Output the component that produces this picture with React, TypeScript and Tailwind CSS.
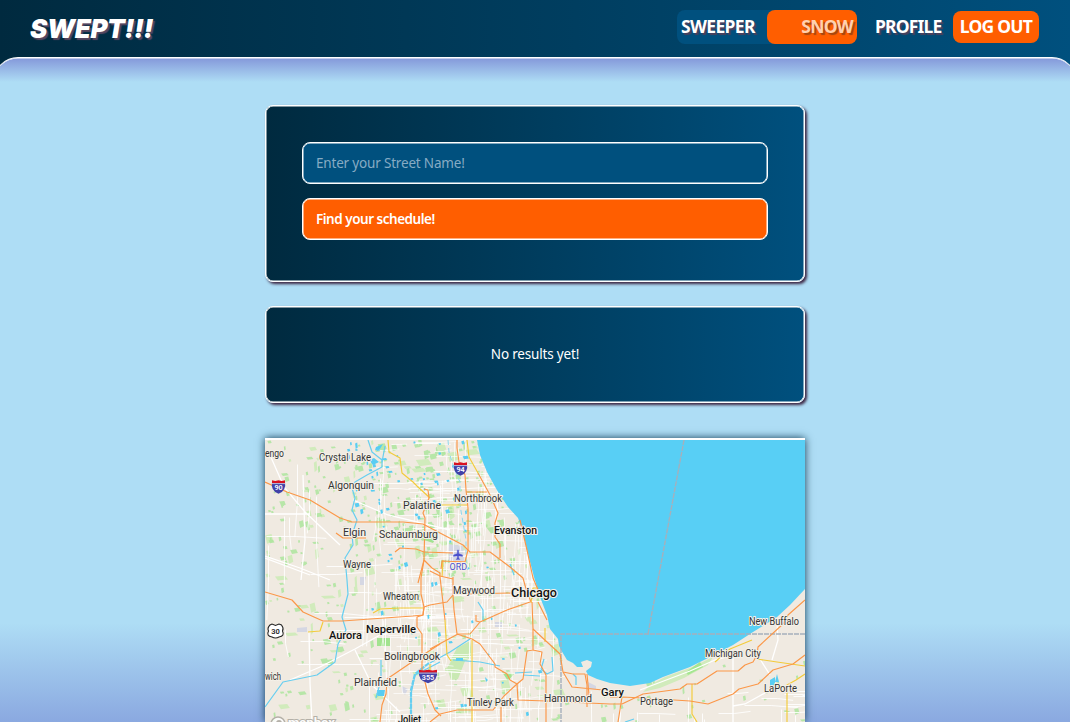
import React from 'react';

type Place = { name: string; x: number; y: number; w: number; size?: number; major?: boolean };

const places: Place[] = [
  { name: 'engo', x: 265, y: 457, w: 19 },
  { name: 'Crystal Lake', x: 319, y: 461, w: 52 },
  { name: 'Algonquin', x: 328, y: 489, w: 46 },
  { name: 'Palatine', x: 403, y: 509, w: 38 },
  { name: 'Northbrook', x: 454, y: 502, w: 48 },
  { name: 'Elgin', x: 343, y: 536, w: 23 },
  { name: 'Schaumburg', x: 379, y: 538, w: 59 },
  { name: 'Evanston', x: 494, y: 534, w: 43, major: true },
  { name: 'Wayne', x: 343, y: 568, w: 28 },
  { name: 'Wheaton', x: 383, y: 600, w: 36 },
  { name: 'Maywood', x: 453, y: 594, w: 42 },
  { name: 'Chicago', x: 511, y: 596.5, w: 46, size: 12.5, major: true },
  { name: 'Aurora', x: 329, y: 639, w: 33, size: 11, major: true },
  { name: 'Naperville', x: 366, y: 633, w: 50, size: 11, major: true },
  { name: 'Bolingbrook', x: 384, y: 660, w: 56 },
  { name: 'wich', x: 265, y: 680, w: 16 },
  { name: 'Plainfield', x: 354, y: 686, w: 43 },
  { name: 'Tinley Park', x: 467, y: 706, w: 47 },
  { name: 'Hammond', x: 544, y: 702, w: 48 },
  { name: 'Gary', x: 601, y: 696, w: 23, size: 11, major: true },
  { name: 'Portage', x: 640, y: 705, w: 33 },
  { name: 'Joliet', x: 398, y: 723, w: 23, size: 11, major: true },
  { name: 'Michigan City', x: 705, y: 657, w: 56 },
  { name: 'New Buffalo', x: 749, y: 625, w: 50 },
  { name: 'LaPorte', x: 764, y: 692, w: 33 },
];

const highways = [
  'M265 482L287 492L310 500L340 518L352 522H403L423 524L440 533L463 545L470 552H490L510 567L523 578L526 589L531 602',
  'M457 440V448L459 462L465 475L466 490L468 508V550L465 562L455 562',
  'M466 492L487 492M478 473L490 495L498 513L495 523V537L500 544V558M520 520L527 550L533 578L539 592',
  'M424 489L428 490L429 498L423 513L425 518L424 560L421 578V594L424 607L423 615L417 617V627L422 634V670L428 694L435 710L441 716',
  'M424 560L432 568L440 573V577L445 620M424 560L418 583M395 552L400 548L416 549L424 552L453 553',
  'M336 533L343 538H366M430 571L440 576L453 579M441 569L442 561L465 562',
  'M265 592L292 600L303 612L314 617L323 621H342L413 616L423 615L424 607L430 605L447 602L453 595V577M453 595L454 610L457 634L472 639L480 644L495 664V667L507 674L510 680L517 684L518 700L546 701',
  'M430 649L458 634L470 634L480 622L507 610L530 602M480 622L476 621V615',
  'M532 602L533 629V650L527 651L523 679L517 684L504 696L493 710H457L440 714L430 722',
  'M533 629L560 654L563 672L572 687L603 690M533 650L542 652L540 664L546 675V722M538 602L547 620M563 672L573 674L585 674L587 685V707',
  'M440 644L412 662L387 679L386 694L382 705L380 722',
  'M546 701L567 702L610 704L622 704L643 694L680 689L687 684H697L717 671H738L745 665L753 662L757 655L758 647L783 624L788 615L805 600',
  'M610 697L622 697L643 698L690 701L708 704L733 694L739 689L758 684L773 670L793 664L805 655M622 697L618 722M501 722V707M463 594L512 593M587 674L589 695',
];

const yellowRoads = [
  'M388 440L389 452L400 458L402 473L413 482L418 487L430 498',
  'M467 440L469 457L478 473M440 505H467',
  'M308 632L320 631L323 622M373 613L380 609L400 608L423 608',
  'M445 620L447 655L451 661M472 640V722',
  'M805 674L796 680L787 685V722M757 659L777 662L805 666',
  'M692 684V714L697 722M715 662L730 649L752 640M531 603L533 588H538M545 628V642M442 577L443 560M430 664V670',
];

const waterways = [
  'M368 440L372 452L382 460V467L367 475L355 482L352 488L355 498L352 510L357 520L352 535L353 545L345 558L347 580L348 594L342 617L346 630L338 644L335 662L317 675L283 682L265 707',
  'M440 662L415 675L411 694V722M430 663L450 652L470 639',
  'M381 660L381 680L376 698M510 564L514 575M478 602L483 610V620M453 660L480 662L500 666M523 675L540 676M573 674L576 677V685M515 673L532 672',
  'M544 659L541 669L547 674L553 671L552 657M385 446L382 462M625 722L634 719',
];

function random(seed: number) {
  let s = seed;
  return () => {
    s = (s * 16807) % 2147483647;
    return s / 2147483647;
  };
}

function patches(seed: number, count: number, box: [number, number, number, number], size: number) {
  const r = random(seed);
  return Array.from({ length: count }, () => {
    const x = box[0] + r() * box[2];
    const y = box[1] + r() * box[3];
    const w = 1.5 + r() * r() * size;
    const h = 1.5 + r() * r() * size;
    return `M${x.toFixed(1)} ${y.toFixed(1)}l${w.toFixed(1)} ${(-h * 0.2).toFixed(1)}l${(w * 0.3).toFixed(1)} ${h.toFixed(1)}l${(-w).toFixed(1)} ${(h * 0.3).toFixed(1)}z`;
  }).join('');
}

function streets(seed: number, count: number, box: [number, number, number, number], reach: number) {
  const r = random(seed);
  return Array.from({ length: count }, (_, i) => {
    const x = Math.round(box[0] + r() * box[2]) + 0.5;
    const y = Math.round(box[1] + r() * box[3]) + 0.5;
    const len = reach * (0.4 + r());
    const bend = (r() - 0.5) * 6;
    return i % 2
      ? `M${x} ${y}h${(len / 2).toFixed(1)}l${(len / 2).toFixed(1)} ${bend.toFixed(1)}`
      : `M${x} ${y}v${(len / 2).toFixed(1)}l${bend.toFixed(1)} ${(len / 2).toFixed(1)}`;
  }).join('');
}

const paleGreens = patches(71, 150, [265, 440, 290, 282], 13);
const greens = patches(923, 330, [265, 440, 300, 282], 6);
const northGreens = patches(407, 150, [350, 440, 150, 130], 7);
const eastGreens = patches(515, 32, [600, 655, 205, 67], 6);
const ponds = patches(3301, 48, [345, 440, 120, 75], 4) + patches(817, 40, [370, 515, 180, 200], 3);
const fineStreets = streets(64, 300, [375, 440, 160, 282], 38);
const wideStreets = streets(1204, 80, [265, 440, 300, 282], 65);
const eastStreets = streets(882, 26, [590, 690, 215, 32], 42);

const lake =
  'M477 440L480 455L487 472L498 492L508 507L518 518L523 532L527 550L534 577L540 597L547 615L550 629L558 639L559 646L561 650L567 660L573 663L577 667L583 667L581 662L587 660L592 662L591 667L586 671L588 675L597 679L610 683L630 686L650 683L663 677L690 667L710 657L733 645L753 632L777 617L790 605L805 589V440Z';

function Interstate({ x, y, label }: { x: number; y: number; label: string }) {
  const w = label.length > 2 ? 9 : 6.5;
  return (
    <g transform={`translate(${x} ${y})`}>
      <path d={`M${-w} -5.5Q${-w - 1.5} 4 0 6.8Q${w + 1.5} 4 ${w} -5.5Z`} fill="#4142a8" />
      <path d={`M${-w} -4V-6.8L${-w / 2} -6L0 -6.8L${w / 2} -6L${w} -6.8V-4Z`} fill="#d81220" />
      <path d={`M${-w} -3.4H${w}`} stroke="#f2eeee" strokeWidth=".7" />
      <text y="3.2" textAnchor="middle" fontSize="7.2" fontWeight="600" fill="#fff">{label}</text>
    </g>
  );
}

function RegionMap() {
  return (
    <svg viewBox="265 440 540 282" className="block h-[282px] w-[540px] font-['Roboto',sans-serif]">
      <rect x="265" y="440" width="540" height="282" fill="#f0eae1" />
      <path d={paleGreens} fill="#d1ebbc" />
      <path d={greens + northGreens + eastGreens} fill="#a9e59a" opacity=".8" />
      <path d="M457 648L470 641L472 655L467 661H450ZM447 668L453 658L465 661L458 679L451 680Z" fill="#c9e9b3" />
      <path d="M377 638H390V646H377ZM425 533L437 536L433 543L424 540ZM502 672L514 674L508 681Z" fill="#a2e38f" />
      <path d="M643 692L650 685L665 677L690 668L713 657L708 665L684 678L660 688Z" fill="#d1ebbc" />
      <path d="M686 672L700 662L703 667L688 675Z" fill="#a5e691" />
      <path d="M448 544L463 546L464 561H449ZM360 577H366L364 585H360ZM297 628L307 627V632H297ZM402 686L408 689L405 695L402 691ZM495 622H502V627H495ZM588 682L596 686V689H588Z" fill="#d5d7e3" />
      <g fill="none" stroke="#ffffff">
        <path d={fineStreets} strokeWidth=".8" opacity=".85" />
        <path d={wideStreets + eastStreets} strokeWidth="1" opacity=".85" />
        <path
          d="M270 455L284 487L305 512L340 545M265 514H310M265 556L300 568L330 580M303 475L305 540L301 580M353 500L388 515L450 530M355 650L372 685L400 712M309 632L310 683L312 722M355 649L320 667L290 680M265 558L310 575M355 649L380 635L417 628M640 690L690 671L715 660L733 655M733 655V722M760 659L770 675M733 706L745 704L765 693M777 622L778 640L772 660"
          strokeWidth="1.3"
        />
      </g>
      <path d={ponds} fill="#58cdf2" />
      <path d="M377 690H385L384 696H378ZM770 680L775 677V685L770 687ZM456 658H463V661H456ZM376 447L383 444L380 449L375 450ZM369 460L374 458L379 462L373 465ZM777 674L779 682L775 682ZM485 677L488 680L486 682Z" fill="#58cdf2" />
      <g fill="none" stroke="#66cef0" strokeWidth="1.2" strokeLinejoin="round">
        {waterways.map((d) => <path key={d} d={d} />)}
      </g>
      <path d="M448 440L449 452L454 468L460 482V505L466 540L466 565" fill="none" stroke="#8ed8ee" strokeWidth="1" strokeDasharray="5 3" />
      <path d="M429 663L415 674L411 690V720" fill="none" stroke="#66cef0" strokeWidth="2.2" strokeDasharray="5 1" />
      <path d={lake} fill="#58cff5" />
      <path d="M684 440L648 634M805 634H561V722" fill="none" stroke="#a5b0bc" strokeWidth="1.4" strokeDasharray="5 1" />
      <g fill="none" strokeWidth="1.15" strokeLinejoin="round">
        {yellowRoads.map((d) => <path key={d} d={d} stroke="#f3cb3a" />)}
        {highways.map((d) => <path key={d} d={d} stroke="#fb9748" />)}
      </g>
      <Interstate x={278.5} y={487} label="90" />
      <Interstate x={460.5} y={469} label="94" />
      <Interstate x={428} y={676.5} label="355" />
      <path d="M270 625L272 624L275.500 625.500L279 624L281.500 625Q284 628 282.500 631Q285 636 279 637Q275.500 639 272 637Q266 636 268.500 631Q267 628 270 625Z" fill="#fff" stroke="#222" strokeWidth="1.1" />
      <text x="275.500" y="634" textAnchor="middle" fontSize="7.5" fontWeight="600" fill="#222">30</text>
      <path d="M457.300 550.500Q458 549 458.700 550.500V553.500L462.500 555V556.500L458.700 556V558L460 559.500H456L457.300 558V556L453.500 556.500V555L457.300 553.500Z" fill="#4a50cc" stroke="#4a50cc" strokeWidth=".3" />
      <g stroke="#f5f1e9" strokeWidth="2" strokeLinejoin="round" paintOrder="stroke">
        <text x="449.500" y="570" fontSize="9" fill="#4a50cc" textLength="17.500" lengthAdjust="spacingAndGlyphs">ORD</text>
        {places.map((p) => (
          <text
            key={p.name}
            x={p.x}
            y={p.y}
            fontSize={p.size ?? 10}
            fontWeight={p.major ? 500 : 400}
            fill={p.major ? '#111' : '#333'}
            textLength={p.w}
            lengthAdjust="spacingAndGlyphs"
          >
            {p.name}
          </text>
        ))}
      </g>
      <g opacity=".85">
        <circle cx="278" cy="724" r="7" fill="#fff" stroke="#aaa79f" strokeWidth="1.500" />
        <circle cx="279" cy="723" r="3" fill="#aaa79f" />
        <text x="288" y="727" fontSize="12" fontWeight="700" fill="#fff" stroke="#aaa79f" strokeWidth="2" paintOrder="stroke" textLength="47" lengthAdjust="spacingAndGlyphs">mapbox</text>
      </g>
    </svg>
  );
}

const card =
  'rounded-[8px] border border-white bg-linear-to-r from-[#002a3f] to-[#00507e] shadow-[inset_0_0_0_0.5px_white,2px_2px_3px_#3b2340]';

export default function App() {
  return (
    <div className="h-[722px] w-[1070px] overflow-hidden bg-linear-to-r from-[#002a3f] to-[#00507e] font-['Noto_Sans',sans-serif] text-white">
      <header className="flex h-[57px] items-center justify-between pr-[31px] pb-[3px] pl-[30px]">
        <h1 className="pt-[3px] font-['Inter',sans-serif] text-[26px] leading-none font-black tracking-[-0.4px] italic [text-shadow:2px_2px_1px_#57465f]">SWEPT!!!</h1>
        <nav className="flex items-center text-[17.5px] leading-none font-bold [text-shadow:2px_2px_1px_#4b405c]">
          <div className="flex h-[34px] w-[180px] items-center rounded-[8px] bg-[#00507e]">
            <span className="w-[90px] pl-[4px] tracking-[-0.65px]">SWEEPER</span>
            <span className="flex h-[34px] w-[90px] items-center justify-end rounded-[8px] bg-[#ff5e00] pr-[4px] tracking-[-0.7px] text-[#ffd0ae] [text-shadow:2px_2px_1px_#a34610]">SNOW</span>
          </div>
          <a className="ml-[18px] w-[78px] tracking-[-0.8px]">PROFILE</a>
          <button className="h-[32px] w-[86px] rounded-[8px] bg-[#ff5e00] text-center leading-none tracking-[-0.75px] whitespace-nowrap [text-shadow:none]">LOG OUT</button>
        </nav>
      </header>
      <main className="-mx-[6px] flex h-[665px] flex-col items-center rounded-t-[24px] border-t border-white bg-[linear-gradient(to_bottom,#8498da_0px,#aeddf5_24px,#aeddf5_565px,#8aa8e0_665px)] pt-[47px] shadow-[inset_0_0.5px_0_white]">
        <section className={`${card} flex h-[177px] w-[540px] flex-col gap-[14px] px-[36px] pt-[36px]`}>
          <input
            className="h-[42px] w-full rounded-[8px] border border-white bg-[#00507e] px-[13px] text-[13.5px] tracking-[-0.18px] shadow-[inset_0_0_0_0.5px_white] outline-none placeholder:text-[#86abc4]"
            placeholder="Enter your Street Name!"
          />
          <button className="h-[42px] w-full rounded-[8px] border border-white bg-[#ff5e00] px-[13px] text-left text-[13.5px] font-semibold tracking-[-0.48px] shadow-[inset_0_0_0_0.5px_white]">Find your schedule!</button>
        </section>
        <section className={`${card} mt-[24px] flex h-[97px] w-[540px] items-center justify-center text-[13.5px] tracking-[-0.18px]`}>No results yet!</section>
        <section className="mt-[35px] w-[540px] border-t-2 border-white shadow-[0_0_8px_#123c55]">
          <RegionMap />
        </section>
      </main>
    </div>
  );
}
